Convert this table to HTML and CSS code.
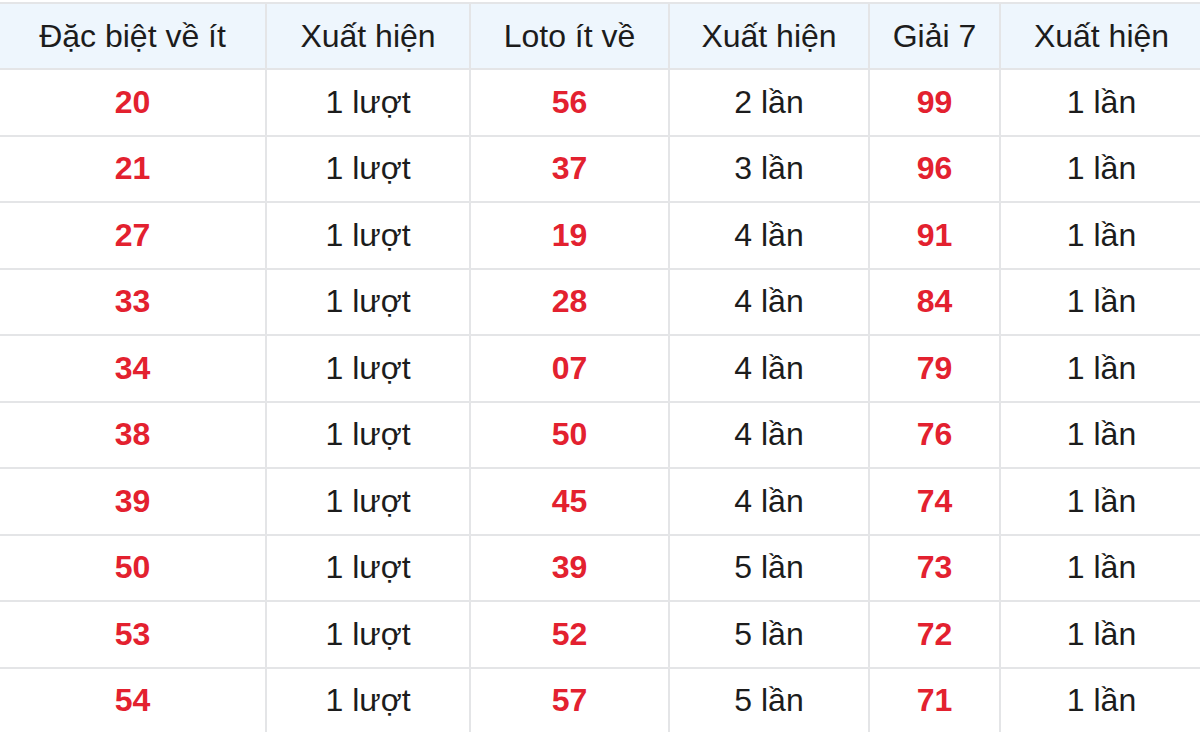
FILE: index.html
```html
<!DOCTYPE html>
<html lang="vi">
<head>
<meta charset="utf-8">
<title>Thống kê</title>
<link rel="stylesheet" href="styles.css">
</head>
<body>
<div class="wrap">
<table class="stats">
<colgroup>
<col class="c1"><col class="c2"><col class="c3"><col class="c4"><col class="c5"><col class="c6">
</colgroup>
<thead>
<tr><th>Đặc biệt về ít</th><th>Xuất hiện</th><th>Loto ít về</th><th>Xuất hiện</th><th>Giải 7</th><th>Xuất hiện</th></tr>
</thead>
<tbody>
<tr><td class="num">20</td><td>1 lượt</td><td class="num">56</td><td>2 lần</td><td class="num">99</td><td>1 lần</td></tr>
<tr><td class="num">21</td><td>1 lượt</td><td class="num">37</td><td>3 lần</td><td class="num">96</td><td>1 lần</td></tr>
<tr><td class="num">27</td><td>1 lượt</td><td class="num">19</td><td>4 lần</td><td class="num">91</td><td>1 lần</td></tr>
<tr><td class="num">33</td><td>1 lượt</td><td class="num">28</td><td>4 lần</td><td class="num">84</td><td>1 lần</td></tr>
<tr><td class="num">34</td><td>1 lượt</td><td class="num">07</td><td>4 lần</td><td class="num">79</td><td>1 lần</td></tr>
<tr><td class="num">38</td><td>1 lượt</td><td class="num">50</td><td>4 lần</td><td class="num">76</td><td>1 lần</td></tr>
<tr><td class="num">39</td><td>1 lượt</td><td class="num">45</td><td>4 lần</td><td class="num">74</td><td>1 lần</td></tr>
<tr><td class="num">50</td><td>1 lượt</td><td class="num">39</td><td>5 lần</td><td class="num">73</td><td>1 lần</td></tr>
<tr><td class="num">53</td><td>1 lượt</td><td class="num">52</td><td>5 lần</td><td class="num">72</td><td>1 lần</td></tr>
<tr><td class="num">54</td><td>1 lượt</td><td class="num">57</td><td>5 lần</td><td class="num">71</td><td>1 lần</td></tr>
</tbody>
</table>
</div>
</body>
</html>
```

FILE: styles.css
```css
html, body {
  margin: 0;
  padding: 0;
  background: #ffffff;
}
.wrap {
  padding-top: 2px;
  width: 1200px;
  overflow: hidden;
}
.stats {
  width: 1202px;
  border-collapse: collapse;
  table-layout: fixed;
  font-family: "Liberation Sans", Arial, sans-serif;
  font-size: 32px;
  color: #1c1c1c;
}
.c1 { width: 266px; }
.c2 { width: 204px; }
.c3 { width: 199px; }
.c4 { width: 200px; }
.c5 { width: 131px; }
.c6 { width: 202px; }
.stats th,
.stats td {
  border: 2px solid #e4e5e7;
  text-align: center;
  padding: 0;
  font-weight: normal;
}
.stats th:first-child,
.stats td:first-child {
  border-left: none;
}
.stats th:last-child,
.stats td:last-child {
  border-right: none;
}
.stats thead tr {
  height: 66px;
}
.stats th {
  background: #eef6fd;
}
.stats tbody tr {
  height: 66.5px;
}
.stats td.num {
  color: #e3212f;
  font-weight: bold;
}
```
